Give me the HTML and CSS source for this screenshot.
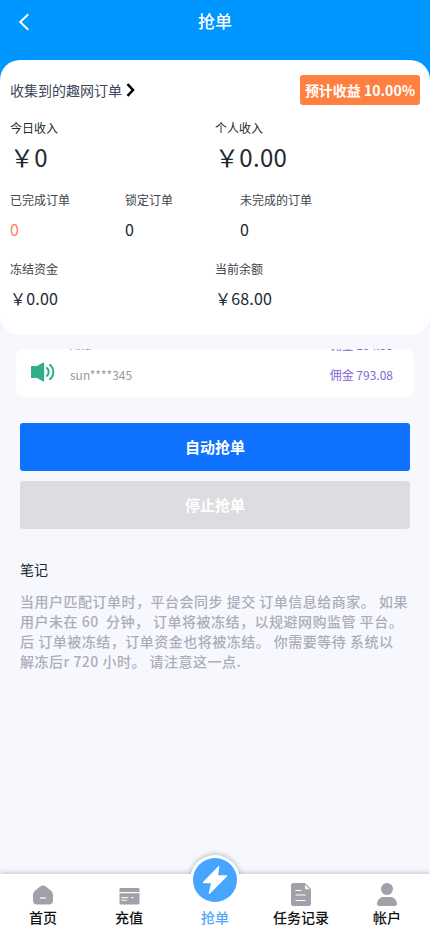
FILE: index.html
```html
<!DOCTYPE html>
<html lang="zh-CN">
<head>
<meta charset="utf-8">
<meta name="viewport" content="width=device-width, initial-scale=1">
<title>抢单</title>
<link rel="stylesheet" href="styles.css">
</head>
<body>
<div class="page">
  <header class="header">
    <svg class="back" viewBox="0 0 12 18"><path d="M10.3 1.3L2.2 9l8.1 7.7" fill="none" stroke="#fff" stroke-width="1.9"/></svg>
    <h1>抢单</h1>
  </header>
  <div class="summary-wrap">
    <section class="summary">
      <div class="summary-head">
        <div class="summary-title"><span>收集到的趣网订单</span><svg class="chevron" viewBox="0 0 9 14"><path d="M1.5 1.2L7 7l-5.500 5.800" fill="none" stroke="#000" stroke-width="2.500"/></svg></div>
        <div class="badge">预计收益 10.00%</div>
      </div>
      <dl class="stats halves income">
        <div><dt>今日收入</dt><dd>￥0</dd></div>
        <div><dt>个人收入</dt><dd>￥0.00</dd></div>
      </dl>
      <dl class="stats orders">
        <div><dt>已完成订单</dt><dd class="accent">0</dd></div>
        <div><dt>锁定订单</dt><dd>0</dd></div>
        <div><dt>未完成的订单</dt><dd>0</dd></div>
      </dl>
      <dl class="stats halves funds">
        <div><dt>冻结资金</dt><dd>￥0.00</dd></div>
        <div><dt>当前余额</dt><dd>￥68.00</dd></div>
      </dl>
    </section>
  </div>
  <section class="notice">
    <svg class="speaker" viewBox="0 0 24 20"><path d="M.5 4h5.500L12.300.5q.9-.3.900.5v18q0 .8-.9.500L6 16H.5q-.5 0-.5-.5v-11Q0 4 .5 4z" fill="#2fae8a"/><path d="M15.200 5.300a5.500 5.500 0 0 1 0 9.200M18.400 2.300a9.600 9.600 0 0 1 0 15.400" fill="none" stroke="#2fae8a" stroke-width="2"/></svg>
    <div class="ticker">
      <div class="row"><span>Anu</span><span class="amount">佣金 134.38</span></div>
      <div class="row"><span>sun****345</span><span class="amount">佣金 793.08</span></div>
    </div>
  </section>
  <div class="actions">
    <button class="start">自动抢单</button>
    <button class="stop" disabled>停止抢单</button>
  </div>
  <section class="notes">
    <h2>笔记</h2>
    <p>当用户匹配订单时，平台会同步 提交 订单信息给商家。 如果<br>用户未在 60&nbsp; 分钟， 订单将被冻结，以规避网购监管 平台。<br>后 订单被冻结，订单资金也将被冻结。 你需要等待 系统以<br>解冻后r 720 小时。 请注意这一点.</p>
  </section>
  <nav class="tabs">
    <a class="tab"><svg class="home" viewBox="0 0 20 20"><path d="M7.200 1.400q2.800-2 5.600 0l5.400 4.400Q20 7.500 20 10v5.200q0 4.300-4.300 4.300H4.300Q0 19.500 0 15.200V10q0-2.500 1.800-4.200z" fill="#a2a0a8"/><path d="M6.800 13h6" stroke="#fff" stroke-width="1.200"/></svg><span>首页</span></a>
    <a class="tab"><svg class="card" viewBox="0 0 20 17"><path d="M1 0h18q1 0 1 1v3H0V1q0-1 1-1zM0 5.200h20V15q0 1.500-1.500 1.500h-17Q0 16.500 0 15z" fill="#a2a0a8"/><path d="M1.800 9.700h7M11.500 9.700h2.500M2 12.200h5.500" stroke="#fff" stroke-width="1"/></svg><span>充值</span></a>
    <a class="tab active"><i class="bubble"><svg viewBox="0 0 44 44"><circle cx="22" cy="22" r="22" fill="#45a5ff"/><path d="M25.300 8.200q1.300-.7 1 .8l-1.200 8.200h8.400q1.300.2.500 1.300L16.800 35.700q-1.200.8-1.100-.7L18 25.300h-7.200q-1.500-.3-.5-1.500z" fill="#fff"/></svg></i><span>抢单</span></a>
    <a class="tab"><svg class="file" viewBox="0 0 20 23"><path d="M2.500 0H14l6 6v14.500q0 2.500-2.500 2.500h-15Q0 23 0 20.500v-18Q0 0 2.500 0z" fill="#a2a0a8"/><path d="M14 1.800l4.500 4.400h-3.300q-1.200 0-1.200-1.200z" fill="#fff"/><path d="M4.500 7.500h6M4.500 12h10M4.500 17.500h10" stroke="#fff" stroke-width="1.100"/></svg><span>任务记录</span></a>
    <a class="tab"><svg class="user" viewBox="0 0 20 23"><circle cx="10" cy="6" r="6" fill="#a2a0a8"/><path d="M5.500 14h9q4.500 1 5.500 6.500 0 2.500-2.500 2.500h-15Q0 23 0 20.500 1 15 5.500 14z" fill="#a2a0a8"/></svg><span>帐户</span></a>
  </nav>
</div>
</body>
</html>
```
FILE: styles.css
```css
* { box-sizing: border-box; margin: 0; padding: 0; }
body { font-family: "Noto Sans CJK SC", sans-serif; color: #212930; background: #f7f8fd; }
svg { display: block; }
.page { height: 932px; display: flex; flex-direction: column; overflow: hidden; }
.header { height: 60px; display: grid; grid-template-columns: 50px 1fr 50px; align-items: start; background: #0096ff; color: #fff; }
.back { width: 12px; height: 18px; margin: 13px 0 0 18px; }
.header h1 { font-size: 17px; line-height: 24px; padding-top: 9px; font-weight: 500; text-align: center; }
.summary-wrap { background: linear-gradient(#0096ff 40px, transparent 40px); }
.summary { height: 275px; border-radius: 20px; background: #fff; padding: 15px 10px 0; }
.summary-head { display: flex; justify-content: space-between; align-items: center; height: 30px; }
.summary-title { display: flex; align-items: center; gap: 4px; font-size: 14px; color: #3a465c; }
.chevron { width: 9px; height: 14px; }
.badge { width: 120px; line-height: 30px; border-radius: 3px; background: #ff8040; color: #fff; font-size: 14px; font-weight: 700; text-align: center; white-space: nowrap; }
.stats { display: grid; grid-template-columns: 115px 115px 1fr; }
.halves { grid-template-columns: 205px 1fr; }
.stats dt { font-size: 12px; line-height: 18px; color: #40444a; }
.stats dd { font-size: 16px; line-height: 24px; }
.income { margin-top: 14px; }
.income dt { color: #212930; }
.income dd { font-size: 24px; line-height: 36px; margin: 2px 0 1px; letter-spacing: .3px; }
.orders { margin-top: 15px; }
.orders dd { margin: 8px 0 1px; }
.stats .accent { color: #ff8060; }
.funds { margin-top: 18px; }
.funds dd { margin-top: 8px; letter-spacing: .2px; }
.notice { flex: none; height: 48px; margin: 14px 16px 0; padding-left: 15px; background: #fff; border-radius: 8px; display: flex; align-items: center; overflow: hidden; }
.speaker { width: 24px; height: 20px; margin-bottom: 2px; }
.ticker { flex: 1; margin: -19px 21px 0 15px; align-self: flex-start; }
.row { display: flex; justify-content: space-between; height: 30px; line-height: 30px; font-size: 12px; color: #999; }
.amount { color: #8364d8; }
.actions { margin: 26px 20px 0; display: grid; gap: 10px; }
button { height: 48px; padding-bottom: 2px; border: 0; border-radius: 3px; color: #fff; font: 700 15px "Noto Sans CJK SC", sans-serif; }
.start { background: #0e72ff; }
.stop { background: #dcdde0; }
.notes { margin: 29px 0 0 20px; }
.notes h2 { font-size: 14px; line-height: 22px; font-weight: 400; }
.notes p { margin-top: 11px; font-size: 14px; line-height: 20px; font-weight: 500; letter-spacing: .5px; color: #abadba; white-space: nowrap; }
.tabs { flex: none; height: 58px; margin-top: auto; display: grid; grid-template-columns: repeat(5, 1fr); background: #fff; box-shadow: 0 0 6px rgba(0, 0, 0, .3); }
.tab { position: relative; display: flex; flex-direction: column; align-items: center; justify-content: flex-end; padding-bottom: 5px; color: #111; font-size: 14px; line-height: 20px; font-weight: 500; }
.home { width: 20px; height: 20px; margin-bottom: 2px; }
.card { width: 21px; height: 17px; margin-bottom: 2px; }
.file, .user { width: 20px; height: 23px; margin-bottom: 1px; }
.active { color: #50a8f8; }
.bubble { position: absolute; top: -19px; left: 50%; width: 50px; height: 50px; margin-left: -25px; padding: 3px; border-radius: 50%; background: #fff; }
.bubble::before { content: ""; position: absolute; inset: 0; border-radius: 50%; box-shadow: 0 -1px 5px rgba(0, 0, 0, .25); clip-path: inset(-8px -8px 31px -8px); }
.bubble svg { width: 44px; height: 44px; }
```
